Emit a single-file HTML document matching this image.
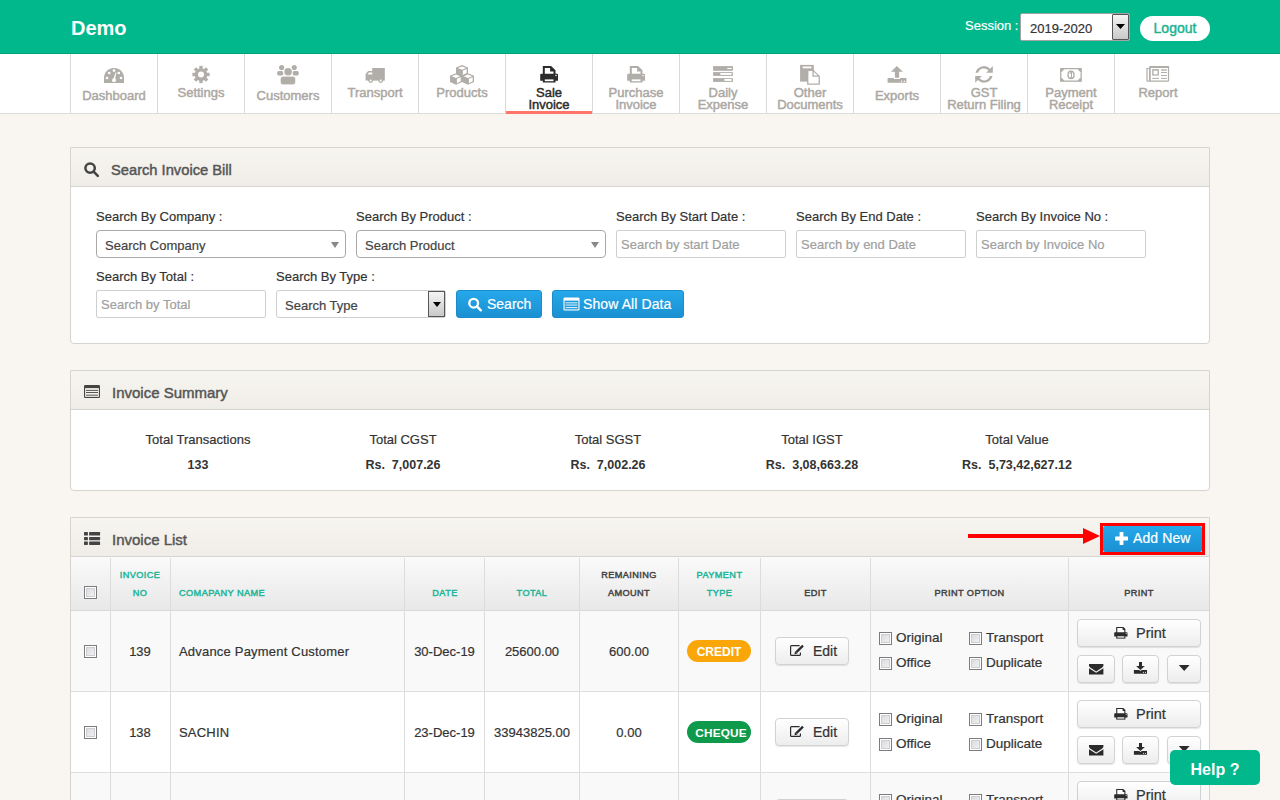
<!DOCTYPE html>
<html><head><meta charset="utf-8"><title>Sale Invoice</title>
<style>
html,body{margin:0;padding:0;}
body{width:1280px;height:800px;overflow:hidden;position:relative;background:#f9f6f1;font-family:"Liberation Sans", sans-serif;}
.t{position:absolute;white-space:nowrap;line-height:1;}
.b{position:absolute;box-sizing:border-box;}
</style></head><body>

<div class="b" style="left:0px;top:0px;width:1280px;height:53px;background:#00b88b;"></div>
<div class="b" style="left:0px;top:53px;width:1280px;height:1px;background:#00a27a;"></div>
<div class="t" style="top:18.07px;font-size:20px;color:#fff;font-weight:bold;left:71px;">Demo</div>
<div class="t" style="top:19.00px;font-size:13px;color:#fff;-webkit-text-stroke:0.2px currentColor;left:965px;">Session :</div>
<div class="b" style="left:1020px;top:13px;width:110px;height:28px;background:#fff;border:1px solid #a3a3a3;border-radius:2px;"></div>
<div class="t" style="top:22.00px;font-size:13px;color:#333;-webkit-text-stroke:0.2px currentColor;left:1030px;">2019-2020</div>
<div class="b" style="left:1112px;top:14px;width:17px;height:26px;background:linear-gradient(#f4f4f4,#c9c9c9);border:1px solid #555;border-radius:1px;"></div>
<svg class="b" style="left:1116px;top:24px;width:9px;height:5px" viewBox="0 0 9 5" fill="#000"><path d="M0 0H9L4.5 5Z"/></svg>
<div class="b" style="left:1140px;top:16px;width:70px;height:25px;background:#fff;border-radius:13px;"></div>
<div class="t" style="top:21.15px;font-size:14px;color:#20b393;-webkit-text-stroke:0.45px currentColor;left:875px;width:600px;text-align:center;">Logout</div>
<div class="b" style="left:0px;top:54px;width:1280px;height:60px;background:#fff;border-bottom:1px solid #dcdcdc;"></div>
<div class="b" style="left:70px;top:54px;width:1px;height:59px;background:#d9d9d9;"></div>
<div class="b" style="left:157px;top:54px;width:1px;height:59px;background:#d9d9d9;"></div>
<div class="b" style="left:244px;top:54px;width:1px;height:59px;background:#d9d9d9;"></div>
<div class="b" style="left:331px;top:54px;width:1px;height:59px;background:#d9d9d9;"></div>
<div class="b" style="left:418px;top:54px;width:1px;height:59px;background:#d9d9d9;"></div>
<div class="b" style="left:505px;top:54px;width:1px;height:59px;background:#d9d9d9;"></div>
<div class="b" style="left:592px;top:54px;width:1px;height:59px;background:#d9d9d9;"></div>
<div class="b" style="left:679px;top:54px;width:1px;height:59px;background:#d9d9d9;"></div>
<div class="b" style="left:766px;top:54px;width:1px;height:59px;background:#d9d9d9;"></div>
<div class="b" style="left:853px;top:54px;width:1px;height:59px;background:#d9d9d9;"></div>
<div class="b" style="left:940px;top:54px;width:1px;height:59px;background:#d9d9d9;"></div>
<div class="b" style="left:1027px;top:54px;width:1px;height:59px;background:#d9d9d9;"></div>
<div class="b" style="left:1114px;top:54px;width:1px;height:59px;background:#d9d9d9;"></div>
<div class="b" style="left:506px;top:111px;width:86px;height:3px;background:#ff756a;"></div>
<div class="t" style="top:89.00px;font-size:13px;color:#aba7a2;-webkit-text-stroke:0.45px currentColor;left:-186px;width:600px;text-align:center;">Dashboard</div>
<div class="t" style="top:86.00px;font-size:13px;color:#aba7a2;-webkit-text-stroke:0.45px currentColor;left:-99px;width:600px;text-align:center;">Settings</div>
<div class="t" style="top:89.00px;font-size:13px;color:#aba7a2;-webkit-text-stroke:0.45px currentColor;left:-12px;width:600px;text-align:center;">Customers</div>
<div class="t" style="top:86.00px;font-size:13px;color:#aba7a2;-webkit-text-stroke:0.45px currentColor;left:75px;width:600px;text-align:center;">Transport</div>
<div class="t" style="top:86.00px;font-size:13px;color:#aba7a2;-webkit-text-stroke:0.45px currentColor;left:162px;width:600px;text-align:center;">Products</div>
<div class="t" style="top:86.00px;font-size:13px;color:#2b2b2b;-webkit-text-stroke:0.45px currentColor;left:249px;width:600px;text-align:center;">Sale</div>
<div class="t" style="top:98.20px;font-size:13px;color:#2b2b2b;-webkit-text-stroke:0.45px currentColor;left:249px;width:600px;text-align:center;">Invoice</div>
<div class="t" style="top:86.00px;font-size:13px;color:#aba7a2;-webkit-text-stroke:0.45px currentColor;left:336px;width:600px;text-align:center;">Purchase</div>
<div class="t" style="top:98.20px;font-size:13px;color:#aba7a2;-webkit-text-stroke:0.45px currentColor;left:336px;width:600px;text-align:center;">Invoice</div>
<div class="t" style="top:86.00px;font-size:13px;color:#aba7a2;-webkit-text-stroke:0.45px currentColor;left:423px;width:600px;text-align:center;">Daily</div>
<div class="t" style="top:98.20px;font-size:13px;color:#aba7a2;-webkit-text-stroke:0.45px currentColor;left:423px;width:600px;text-align:center;">Expense</div>
<div class="t" style="top:86.00px;font-size:13px;color:#aba7a2;-webkit-text-stroke:0.45px currentColor;left:510px;width:600px;text-align:center;">Other</div>
<div class="t" style="top:98.20px;font-size:13px;color:#aba7a2;-webkit-text-stroke:0.45px currentColor;left:510px;width:600px;text-align:center;">Documents</div>
<div class="t" style="top:89.00px;font-size:13px;color:#aba7a2;-webkit-text-stroke:0.45px currentColor;left:597px;width:600px;text-align:center;">Exports</div>
<div class="t" style="top:86.00px;font-size:13px;color:#aba7a2;-webkit-text-stroke:0.45px currentColor;left:684px;width:600px;text-align:center;">GST</div>
<div class="t" style="top:98.20px;font-size:13px;color:#aba7a2;-webkit-text-stroke:0.45px currentColor;left:684px;width:600px;text-align:center;">Return Filing</div>
<div class="t" style="top:86.00px;font-size:13px;color:#aba7a2;-webkit-text-stroke:0.45px currentColor;left:771px;width:600px;text-align:center;">Payment</div>
<div class="t" style="top:98.20px;font-size:13px;color:#aba7a2;-webkit-text-stroke:0.45px currentColor;left:771px;width:600px;text-align:center;">Receipt</div>
<div class="t" style="top:86.00px;font-size:13px;color:#aba7a2;-webkit-text-stroke:0.45px currentColor;left:858px;width:600px;text-align:center;">Report</div>
<svg style="position:absolute;left:100px;top:60px;width:30px;height:30px;overflow:visible" viewBox="100 60 30 30" fill="#b1ada8"><path d="M104 83 V78 C104 72 108.5 68 114 68 C119.5 68 124 72 124 78 V83 Z"/><g fill="#fff"><circle cx="114" cy="70.6" r="1.35"/><circle cx="109.2" cy="73" r="1.35"/><circle cx="118.8" cy="73" r="1.35"/><circle cx="107" cy="78" r="1.35"/><circle cx="121" cy="78" r="1.35"/><path d="M113.2 79.5 L115.7 72.2 L116.4 72.4 L115 79.8 Z"/><circle cx="114" cy="80.2" r="2"/></g></svg>
<svg style="position:absolute;left:188px;top:62px;width:26px;height:26px;overflow:visible" viewBox="188 62 26 26" fill="#b1ada8"><circle cx="201" cy="74.5" r="6.3"/><rect x="199.3" y="65.9" width="3.4" height="8.6" transform="rotate(0.0 201 74.5)"/><rect x="199.3" y="65.9" width="3.4" height="8.6" transform="rotate(45.0 201 74.5)"/><rect x="199.3" y="65.9" width="3.4" height="8.6" transform="rotate(90.0 201 74.5)"/><rect x="199.3" y="65.9" width="3.4" height="8.6" transform="rotate(135.0 201 74.5)"/><rect x="199.3" y="65.9" width="3.4" height="8.6" transform="rotate(180.0 201 74.5)"/><rect x="199.3" y="65.9" width="3.4" height="8.6" transform="rotate(225.0 201 74.5)"/><rect x="199.3" y="65.9" width="3.4" height="8.6" transform="rotate(270.0 201 74.5)"/><rect x="199.3" y="65.9" width="3.4" height="8.6" transform="rotate(315.0 201 74.5)"/><circle cx="201" cy="74.5" r="3.0" fill="#fff"/></svg>
<svg style="position:absolute;left:272px;top:60px;width:32px;height:30px;overflow:visible" viewBox="272 60 32 30" fill="#b1ada8"><circle cx="281.59999999999997" cy="67.5" r="2.55"/><circle cx="294.3" cy="67.5" r="2.55"/><rect x="277.2" y="71.0" width="6" height="4.6" rx="1.6"/><rect x="292.7" y="71.0" width="6" height="4.6" rx="1.6"/><circle cx="288.09999999999997" cy="71.80000000000001" r="4.1" stroke="#fff" stroke-width="0.7"/><rect x="280.3" y="76.2" width="15.3" height="8.6" rx="2.8" stroke="#fff" stroke-width="0.7"/></svg>
<svg style="position:absolute;left:360px;top:62px;width:30px;height:26px;overflow:visible" viewBox="360 62 30 26" fill="#b1ada8"><rect x="372.20000000000005" y="68" width="12.6" height="12.6"/><path d="M365.6 80.6 V74 L368.20000000000005 71.1 H372.6 V80.6 Z"/><path d="M367.40000000000003 74.6 L368.90000000000003 72.6 H372.20000000000005 V74.6 Z" fill="#fff"/><circle cx="370.6" cy="80.6" r="2.4" /><circle cx="370.6" cy="80.6" r="1.05" fill="#fff"/><circle cx="380.70000000000005" cy="80.6" r="2.4" /><circle cx="380.70000000000005" cy="80.6" r="1.05" fill="#fff"/></svg>
<svg style="position:absolute;left:444px;top:60px;width:36px;height:30px;overflow:visible" viewBox="444 60 36 30" fill="#b1ada8"><path d="M462 65 L468 67.6 V73.7 L462 76.6 L456 73.7 V67.6 Z"/><path d="M462 66.4 L466.2 68.1 L462 69.7 L457.8 68.1 Z" fill="#fff"/><path d="M462.9 70.6 L466.7 69.1 V73.1 L462.9 75 Z" fill="#fff"/><path d="M456 73.2 L462 75.8 V81.9 L456 84.8 L450 81.9 V75.8 Z"/><path d="M456 74.60000000000001 L460.2 76.3 L456 77.9 L451.8 76.3 Z" fill="#fff"/><path d="M456.9 78.8 L460.7 77.3 V81.3 L456.9 83.2 Z" fill="#fff"/><path d="M468 73.2 L474 75.8 V81.9 L468 84.8 L462 81.9 V75.8 Z"/><path d="M468 74.60000000000001 L472.2 76.3 L468 77.9 L463.8 76.3 Z" fill="#fff"/><path d="M468.9 78.8 L472.7 77.3 V81.3 L468.9 83.2 Z" fill="#fff"/></svg>
<svg style="position:absolute;left:535px;top:60px;width:28px;height:28px;overflow:visible" viewBox="535 60 28 28" fill="#2b2b2b"><path d="M542.80 66.00 L551.10 66.00 L555.50 70.30 L555.50 74.00 L542.80 74.00 Z" fill="#2b2b2b"/><path d="M544.80 67.90 L550.10 67.90 L550.10 71.60 L553.50 71.60 L553.50 74.00 L544.80 74.00 Z" fill="#fff"/><path d="M541.20 73.70 L557.00 73.70 Q558.00 73.70 558.00 74.70 L558.00 80.70 L555.50 80.70 L555.50 82.60 L542.80 82.60 L542.80 80.70 L540.20 80.70 L540.20 74.70 Q540.20 73.70 541.20 73.70 Z" fill="#2b2b2b"/><path d="M544.80 79.40 L553.50 79.40 L553.50 81.20 L544.80 81.20 Z" fill="#fff"/><circle cx="556.00" cy="75.60" r="0.75" fill="#fff"/></svg>
<svg style="position:absolute;left:622px;top:60px;width:28px;height:28px;overflow:visible" viewBox="622 60 28 28" fill="#b1ada8"><path d="M629.80 66.00 L638.10 66.00 L642.50 70.30 L642.50 74.00 L629.80 74.00 Z" fill="#b1ada8"/><path d="M631.80 67.90 L637.10 67.90 L637.10 71.60 L640.50 71.60 L640.50 74.00 L631.80 74.00 Z" fill="#fff"/><path d="M628.20 73.70 L644.00 73.70 Q645.00 73.70 645.00 74.70 L645.00 80.70 L642.50 80.70 L642.50 82.60 L629.80 82.60 L629.80 80.70 L627.20 80.70 L627.20 74.70 Q627.20 73.70 628.20 73.70 Z" fill="#b1ada8"/><path d="M631.80 79.40 L640.50 79.40 L640.50 81.20 L631.80 81.20 Z" fill="#fff"/><circle cx="643.00" cy="75.60" r="0.75" fill="#fff"/></svg>
<svg style="position:absolute;left:708px;top:60px;width:30px;height:28px;overflow:visible" viewBox="708 60 30 28" fill="#b1ada8"><rect x="713.1" y="66.1" width="19.8" height="4.7"/><rect x="713.1" y="72.1" width="19.8" height="3.8"/><rect x="713.1" y="78.1" width="19.8" height="3.8"/><g fill="#fff"><rect x="727.3" y="67.9" width="4.3" height="1.2"/><rect x="720.3" y="73" width="11.3" height="1.9"/><rect x="724.4" y="78.9" width="7.2" height="2"/></g></svg>
<svg style="position:absolute;left:795px;top:60px;width:30px;height:30px;overflow:visible" viewBox="795 60 30 30" fill="#b1ada8"><rect x="800.1" y="64.9" width="13.7" height="16.7"/><rect x="802.7" y="66.5" width="8.8" height="1.8" fill="#fff"/><path d="M807.1 69.9 H813.4 L819.9 75.9 V84.80000000000001 H807.1 Z"/><path d="M808.4 71.10000000000001 H812.4 V76.7 H818.6 V83.5 H808.4 Z" fill="#fff"/><path d="M813.7 71.80000000000001 L817.7 75.5 H813.7 Z" fill="#fff"/></svg>
<svg style="position:absolute;left:882px;top:60px;width:30px;height:28px;overflow:visible" viewBox="882 60 30 28" fill="#b1ada8"><path d="M896.8000000000001 66 L902.9 71.8 H899.1 V77.8 H894.9 V71.8 H891.0 Z"/><path d="M887.6 78.1 H893.9 V79 H900.1 V78.1 H906.4 V82.8 H887.6 Z"/><circle cx="901.6" cy="81.3" r="0.7" fill="#fff"/><circle cx="904.4" cy="81.3" r="0.7" fill="#fff"/></svg>
<svg style="position:absolute;left:970px;top:60px;width:28px;height:28px;overflow:visible" viewBox="970 60 28 28" fill="#b1ada8"><path d="M975.5 72.8 A8.7 8.7 0 0 1 990.1 68.7 L992.8000000000001 66 V72.8 H986.1 L988.5 70.5 A6.1 6.1 0 0 0 978.1 72.8 Z"/><path d="M975.5 72.8 A8.7 8.7 0 0 1 990.1 68.7 L992.8000000000001 66 V72.8 H986.1 L988.5 70.5 A6.1 6.1 0 0 0 978.1 72.8 Z" transform="rotate(180 984.0 74.4)"/></svg>
<svg style="position:absolute;left:1055px;top:62px;width:32px;height:26px;overflow:visible" viewBox="1055 62 32 26" fill="#b1ada8"><rect x="1060.1" y="68" width="21.7" height="13.8"/><path d="M1064.3 69.2 H1077.6 L1080.5 72.2 V77.6 L1077.6 80.6 H1064.3 L1061.3999999999999 77.6 V72.2 Z" fill="#fff"/><ellipse cx="1071.0" cy="74.9" rx="3.7" ry="4.4"/><ellipse cx="1071.0" cy="74.9" rx="2.3" ry="3.0" fill="#fff"/><path d="M1069.6999999999998 72.9 L1071.1 71.9 H1072.0 V77.1 H1071.0 V73.4 L1070.1 73.9 Z"/><rect x="1069.3999999999999" y="77.1" width="3.3" height="0.9"/></svg>
<svg style="position:absolute;left:1140px;top:60px;width:34px;height:28px;overflow:visible" viewBox="1140 60 34 28" fill="#b1ada8"><path d="M1149.3000000000002 66 H1169.1000000000001 V80.6 Q1169.1000000000001 81.8 1167.9 81.8 H1147.6000000000001 Q1146.4 81.8 1146.4 80.6 V68 H1149.3000000000002 Z"/><path d="M1150.7 67.9 H1167.9 V80.3 Q1167.9 80.6 1167.6000000000001 80.6 H1150.7 Z" fill="#fff"/><rect x="1147.6000000000001" y="69" width="1.4" height="11.6" fill="#fff"/><rect x="1152.2" y="69.1" width="6.7" height="6.5"/><rect x="1153.5" y="70.6" width="4.1" height="3.8" fill="#fff"/><rect x="1161.0" y="69.3" width="5.8" height="1.4"/><rect x="1161.0" y="72" width="5.8" height="1"/><rect x="1161.0" y="75" width="5.8" height="1"/><rect x="1152.2" y="77.9" width="6.7" height="1"/><rect x="1161.0" y="77.9" width="5.8" height="1"/></svg>
<div class="b" style="left:70px;top:147px;width:1140px;height:197px;background:#fff;border:1px solid #d6d4cf;border-radius:0 0 4px 4px;"></div>
<div class="b" style="left:71px;top:148px;width:1138px;height:39px;background:linear-gradient(#f7f5f0,#f0ede8);border-bottom:1px solid #d6d4cf;"></div>
<div class="b" style="left:70px;top:370px;width:1140px;height:121px;background:#fff;border:1px solid #d6d4cf;border-radius:0 0 4px 4px;"></div>
<div class="b" style="left:71px;top:371px;width:1138px;height:39px;background:linear-gradient(#f7f5f0,#f0ede8);border-bottom:1px solid #d6d4cf;"></div>
<div class="b" style="left:70px;top:517px;width:1140px;height:484px;background:#fff;border:1px solid #d6d4cf;border-radius:0 0 4px 4px;"></div>
<div class="b" style="left:71px;top:518px;width:1138px;height:39px;background:linear-gradient(#f7f5f0,#f0ede8);border-bottom:1px solid #d6d4cf;"></div>
<svg style="position:absolute;left:80px;top:158px;width:24px;height:24px;overflow:visible" viewBox="80 158 24 24" fill="#444"><circle cx="90.1" cy="168.1" r="4.7" fill="none" stroke="#444" stroke-width="2.5"/><path d="M93.6 171.6 L97.8 175.8" stroke="#444" stroke-width="2.6" stroke-linecap="round"/></svg>
<svg style="position:absolute;left:80px;top:380px;width:24px;height:24px;overflow:visible" viewBox="80 380 24 24" fill="#444"><rect x="84" y="385" width="16" height="13" rx="1.3" fill="#444"/><rect x="85.1" y="388.1" width="13.8" height="8.8" fill="#f3f1ec"/><rect x="86" y="389.9" width="12" height="0.9" fill="#444"/><rect x="86" y="392.1" width="12" height="0.9" fill="#444"/><rect x="86" y="394.7" width="12" height="0.9" fill="#444"/></svg>
<svg style="position:absolute;left:80px;top:528px;width:24px;height:24px;overflow:visible" viewBox="80 528 24 24" fill="#444"><g fill="#444"><rect x="84" y="532" width="3.9" height="3.6" rx="0.6"/><rect x="89.1" y="532" width="11" height="3.6" rx="0.6"/><rect x="84" y="536.9" width="3.9" height="3.3" rx="0.6"/><rect x="89.1" y="536.9" width="11" height="3.3" rx="0.6"/><rect x="84" y="541.5" width="3.9" height="3.4" rx="0.6"/><rect x="89.1" y="541.5" width="11" height="3.4" rx="0.6"/></g></svg>
<div class="t" style="top:162.96px;font-size:14.7px;color:#555;-webkit-text-stroke:0.45px currentColor;left:111px;">Search Invoice Bill</div>
<div class="t" style="top:384.90px;font-size:15px;color:#555;-webkit-text-stroke:0.45px currentColor;left:112px;">Invoice Summary</div>
<div class="t" style="top:532.30px;font-size:15px;color:#555;-webkit-text-stroke:0.45px currentColor;left:112px;">Invoice List</div>
<div class="t" style="top:210.00px;font-size:13px;color:#333;-webkit-text-stroke:0.2px currentColor;left:96px;">Search By Company :</div>
<div class="t" style="top:210.00px;font-size:13px;color:#333;-webkit-text-stroke:0.2px currentColor;left:356px;">Search By Product :</div>
<div class="t" style="top:210.00px;font-size:13px;color:#333;-webkit-text-stroke:0.2px currentColor;left:616px;">Search By Start Date :</div>
<div class="t" style="top:210.00px;font-size:13px;color:#333;-webkit-text-stroke:0.2px currentColor;left:796px;">Search By End Date :</div>
<div class="t" style="top:210.00px;font-size:13px;color:#333;-webkit-text-stroke:0.2px currentColor;left:976px;">Search By Invoice No :</div>
<div class="t" style="top:270.00px;font-size:13px;color:#333;-webkit-text-stroke:0.2px currentColor;left:96px;">Search By Total :</div>
<div class="t" style="top:270.00px;font-size:13px;color:#333;-webkit-text-stroke:0.2px currentColor;left:276px;">Search By Type :</div>
<div class="b" style="left:96px;top:230px;width:250px;height:28px;background:#fff;border:1px solid #a9a9a9;border-radius:4px;"></div>
<div class="t" style="top:239.00px;font-size:13px;color:#444;-webkit-text-stroke:0.2px currentColor;left:105px;">Search Company</div>
<svg class="b" style="left:331px;top:242px;width:8px;height:6px" viewBox="0 0 8 6" fill="#888"><path d="M0 0H8L4 6Z"/></svg>
<div class="b" style="left:356px;top:230px;width:250px;height:28px;background:#fff;border:1px solid #a9a9a9;border-radius:4px;"></div>
<div class="t" style="top:239.00px;font-size:13px;color:#444;-webkit-text-stroke:0.2px currentColor;left:365px;">Search Product</div>
<svg class="b" style="left:591px;top:242px;width:8px;height:6px" viewBox="0 0 8 6" fill="#888"><path d="M0 0H8L4 6Z"/></svg>
<div class="b" style="left:616px;top:230px;width:170px;height:28px;background:#fff;border:1px solid #cfcfcf;border-radius:2px;"></div>
<div class="t" style="top:237.80px;font-size:13px;color:#a0a0a0;-webkit-text-stroke:0.2px currentColor;left:621px;">Search by start Date</div>
<div class="b" style="left:796px;top:230px;width:170px;height:28px;background:#fff;border:1px solid #cfcfcf;border-radius:2px;"></div>
<div class="t" style="top:237.80px;font-size:13px;color:#a0a0a0;-webkit-text-stroke:0.2px currentColor;left:801px;">Search by end Date</div>
<div class="b" style="left:976px;top:230px;width:170px;height:28px;background:#fff;border:1px solid #cfcfcf;border-radius:2px;"></div>
<div class="t" style="top:237.80px;font-size:13px;color:#a0a0a0;-webkit-text-stroke:0.2px currentColor;left:981px;">Search by Invoice No</div>
<div class="b" style="left:96px;top:290px;width:170px;height:28px;background:#fff;border:1px solid #cfcfcf;border-radius:2px;"></div>
<div class="t" style="top:297.80px;font-size:13px;color:#a0a0a0;-webkit-text-stroke:0.2px currentColor;left:101px;">Search by Total</div>
<div class="b" style="left:276px;top:290px;width:170px;height:28px;background:#fff;border:1px solid #cfcfcf;border-radius:3px;"></div>
<div class="t" style="top:299.00px;font-size:13px;color:#444;-webkit-text-stroke:0.2px currentColor;left:285px;">Search Type</div>
<div class="b" style="left:428px;top:291px;width:17px;height:26px;background:linear-gradient(#f4f4f4,#c9c9c9);border:1px solid #555;"></div>
<svg class="b" style="left:433px;top:302px;width:8px;height:5px" viewBox="0 0 8 5" fill="#000"><path d="M0 0H8L4 5Z"/></svg>
<div class="b" style="left:456px;top:290px;width:86px;height:28px;background:linear-gradient(#25a8ea,#1b90d2);border:1px solid #1a8ccc;border-radius:3px;"></div>
<div class="t" style="top:297.15px;font-size:14px;color:#fff;-webkit-text-stroke:0.2px currentColor;left:487px;">Search</div>
<div class="b" style="left:552px;top:290px;width:132px;height:28px;background:linear-gradient(#25a8ea,#1b90d2);border:1px solid #1a8ccc;border-radius:3px;"></div>
<div class="t" style="top:297.15px;font-size:14px;color:#fff;-webkit-text-stroke:0.2px currentColor;letter-spacing:0.1px;left:583px;">Show All Data</div>
<svg style="position:absolute;left:464px;top:294px;width:22px;height:20px;overflow:visible" viewBox="464 294 22 20" fill="#fff"><circle cx="473.673" cy="303.173" r="4.371" fill="none" stroke="#fff" stroke-width="2.325"/><path d="M476.928 306.428 L480.834 310.334" stroke="#fff" stroke-width="2.418" stroke-linecap="round"/></svg>
<svg style="position:absolute;left:560px;top:294px;width:22px;height:20px;overflow:visible" viewBox="560 294 22 20" fill="#fff"><rect x="563.5" y="297.5" width="16" height="13" rx="1.3" fill="#fff"/><rect x="564.6" y="300.6" width="13.8" height="8.8" fill="#1f9bdc"/><rect x="565.5" y="302.4" width="12" height="0.9" fill="#fff"/><rect x="565.5" y="304.6" width="12" height="0.9" fill="#fff"/><rect x="565.5" y="307.2" width="12" height="0.9" fill="#fff"/></svg>
<div class="t" style="top:433.10px;font-size:13px;color:#333;-webkit-text-stroke:0.2px currentColor;left:-102px;width:600px;text-align:center;">Total Transactions</div>
<div class="t" style="top:458.82px;font-size:12.5px;color:#333;font-weight:bold;left:-102px;width:600px;text-align:center;">133</div>
<div class="t" style="top:433.10px;font-size:13px;color:#333;-webkit-text-stroke:0.2px currentColor;left:103px;width:600px;text-align:center;">Total CGST</div>
<div class="t" style="top:458.82px;font-size:12.5px;color:#333;font-weight:bold;left:103px;width:600px;text-align:center;">Rs.&nbsp; 7,007.26</div>
<div class="t" style="top:433.10px;font-size:13px;color:#333;-webkit-text-stroke:0.2px currentColor;left:308px;width:600px;text-align:center;">Total SGST</div>
<div class="t" style="top:458.82px;font-size:12.5px;color:#333;font-weight:bold;left:308px;width:600px;text-align:center;">Rs.&nbsp; 7,002.26</div>
<div class="t" style="top:433.10px;font-size:13px;color:#333;-webkit-text-stroke:0.2px currentColor;left:512px;width:600px;text-align:center;">Total IGST</div>
<div class="t" style="top:458.82px;font-size:12.5px;color:#333;font-weight:bold;left:512px;width:600px;text-align:center;">Rs.&nbsp; 3,08,663.28</div>
<div class="t" style="top:433.10px;font-size:13px;color:#333;-webkit-text-stroke:0.2px currentColor;left:717px;width:600px;text-align:center;">Total Value</div>
<div class="t" style="top:458.82px;font-size:12.5px;color:#333;font-weight:bold;left:717px;width:600px;text-align:center;">Rs.&nbsp; 5,73,42,627.12</div>
<div class="b" style="left:1100px;top:523px;width:105px;height:32px;border:3px solid #f00;"></div>
<div class="b" style="left:1103px;top:526px;width:99px;height:26px;background:linear-gradient(#25a8ea,#1b90d2);border-radius:2px;"></div>
<div class="t" style="top:531.25px;font-size:14px;color:#fff;-webkit-text-stroke:0.2px currentColor;letter-spacing:0.1px;left:1133px;">Add New</div>
<svg style="position:absolute;left:1110px;top:528px;width:22px;height:22px;overflow:visible" viewBox="1110 528 22 22" fill="#fff"><rect x="1115" y="536.6" width="13" height="3.8" rx="0.6"/><rect x="1119.6" y="532" width="3.8" height="13" rx="0.6"/></svg>
<svg class="b" style="left:960px;top:520px;width:150px;height:35px" viewBox="0 0 150 35"><rect x="8" y="14" width="116" height="4" fill="#f00"/><path d="M123 8L140 16L123 24Z" fill="#f00"/></svg>
<div class="b" style="left:71px;top:557px;width:1138px;height:54px;background:linear-gradient(#fafafa,#e8e8e8);border-bottom:1px solid #d9d9d9;"></div>
<div class="b" style="left:71px;top:611px;width:1138px;height:81px;background:#f9f9f9;border-bottom:1px solid #dddddd;"></div>
<div class="b" style="left:71px;top:692px;width:1138px;height:81px;background:#fff;border-bottom:1px solid #dddddd;"></div>
<div class="b" style="left:71px;top:773px;width:1138px;height:81px;background:#f9f9f9;border-bottom:1px solid #dddddd;"></div>
<div class="b" style="left:110px;top:558px;width:1px;height:243px;background:#dcdcdc;"></div>
<div class="b" style="left:170px;top:558px;width:1px;height:243px;background:#dcdcdc;"></div>
<div class="b" style="left:404px;top:558px;width:1px;height:243px;background:#dcdcdc;"></div>
<div class="b" style="left:484px;top:558px;width:1px;height:243px;background:#dcdcdc;"></div>
<div class="b" style="left:579px;top:558px;width:1px;height:243px;background:#dcdcdc;"></div>
<div class="b" style="left:678px;top:558px;width:1px;height:243px;background:#dcdcdc;"></div>
<div class="b" style="left:760px;top:558px;width:1px;height:243px;background:#dcdcdc;"></div>
<div class="b" style="left:870px;top:558px;width:1px;height:243px;background:#dcdcdc;"></div>
<div class="b" style="left:1068px;top:558px;width:1px;height:243px;background:#dcdcdc;"></div>
<div class="b" style="left:84px;top:586px;width:13px;height:13px;background:linear-gradient(135deg,#d4d6dc,#f6f6f6);border:1px solid #7c7c7c;box-shadow:inset 0 0 0 1px #fff,inset 0 0 0 2px #cdcdd2;"></div>
<div class="t" style="top:571.41px;font-size:9.2px;color:#1db598;-webkit-text-stroke:0.45px currentColor;letter-spacing:0.4px;left:-160px;width:600px;text-align:center;">INVOICE</div>
<div class="t" style="top:589.21px;font-size:9.2px;color:#1db598;-webkit-text-stroke:0.45px currentColor;letter-spacing:0.4px;left:-160px;width:600px;text-align:center;">NO</div>
<div class="t" style="top:589.21px;font-size:9.2px;color:#1db598;-webkit-text-stroke:0.45px currentColor;letter-spacing:0.4px;left:179px;">COMAPANY NAME</div>
<div class="t" style="top:589.21px;font-size:9.2px;color:#1db598;-webkit-text-stroke:0.45px currentColor;letter-spacing:0.4px;left:145px;width:600px;text-align:center;">DATE</div>
<div class="t" style="top:589.21px;font-size:9.2px;color:#1db598;-webkit-text-stroke:0.45px currentColor;letter-spacing:0.4px;left:232px;width:600px;text-align:center;">TOTAL</div>
<div class="t" style="top:571.41px;font-size:9.2px;color:#444;-webkit-text-stroke:0.45px currentColor;letter-spacing:0.4px;left:329px;width:600px;text-align:center;">REMAINING</div>
<div class="t" style="top:589.21px;font-size:9.2px;color:#444;-webkit-text-stroke:0.45px currentColor;letter-spacing:0.4px;left:329px;width:600px;text-align:center;">AMOUNT</div>
<div class="t" style="top:571.41px;font-size:9.2px;color:#1db598;-webkit-text-stroke:0.45px currentColor;letter-spacing:0.4px;left:419.5px;width:600px;text-align:center;">PAYMENT</div>
<div class="t" style="top:589.21px;font-size:9.2px;color:#1db598;-webkit-text-stroke:0.45px currentColor;letter-spacing:0.4px;left:419.5px;width:600px;text-align:center;">TYPE</div>
<div class="t" style="top:589.21px;font-size:9.2px;color:#444;-webkit-text-stroke:0.45px currentColor;letter-spacing:0.4px;left:515.5px;width:600px;text-align:center;">EDIT</div>
<div class="t" style="top:589.21px;font-size:9.2px;color:#444;-webkit-text-stroke:0.45px currentColor;letter-spacing:0.4px;left:669.5px;width:600px;text-align:center;">PRINT OPTION</div>
<div class="t" style="top:589.21px;font-size:9.2px;color:#444;-webkit-text-stroke:0.45px currentColor;letter-spacing:0.4px;left:839px;width:600px;text-align:center;">PRINT</div>
<div class="b" style="left:84px;top:645px;width:13px;height:13px;background:linear-gradient(135deg,#d4d6dc,#f6f6f6);border:1px solid #7c7c7c;box-shadow:inset 0 0 0 1px #fff,inset 0 0 0 2px #cdcdd2;"></div>
<div class="t" style="top:645.00px;font-size:13px;color:#333;-webkit-text-stroke:0.2px currentColor;left:-160px;width:600px;text-align:center;">139</div>
<div class="t" style="top:645.00px;font-size:13px;color:#333;-webkit-text-stroke:0.2px currentColor;letter-spacing:0.2px;left:179px;">Advance Payment Customer</div>
<div class="t" style="top:645.00px;font-size:13px;color:#333;-webkit-text-stroke:0.2px currentColor;left:144.5px;width:600px;text-align:center;">30-Dec-19</div>
<div class="t" style="top:645.00px;font-size:13px;color:#333;-webkit-text-stroke:0.2px currentColor;left:232px;width:600px;text-align:center;">25600.00</div>
<div class="t" style="top:645.00px;font-size:13px;color:#333;-webkit-text-stroke:0.2px currentColor;left:329px;width:600px;text-align:center;">600.00</div>
<div class="b" style="left:687px;top:640px;width:64px;height:22px;background:#fba608;border-radius:11px;"></div>
<div class="t" style="top:645.84px;font-size:12px;color:#fff;font-weight:bold;left:419px;width:600px;text-align:center;">CREDIT</div>
<div class="b" style="left:775px;top:637px;width:74px;height:28px;background:linear-gradient(#ffffff,#ededed);border:1px solid #d2d2d2;border-radius:4px;box-shadow:0 1px 1px rgba(0,0,0,.1);"></div>
<div class="t" style="top:644.15px;font-size:14px;color:#333;-webkit-text-stroke:0.2px currentColor;left:813px;">Edit</div>
<div class="b" style="left:879px;top:632px;width:13px;height:13px;background:linear-gradient(135deg,#d4d6dc,#f6f6f6);border:1px solid #7c7c7c;box-shadow:inset 0 0 0 1px #fff,inset 0 0 0 2px #cdcdd2;"></div>
<div class="t" style="top:630.57px;font-size:13.5px;color:#333;-webkit-text-stroke:0.2px currentColor;left:896px;">Original</div>
<div class="b" style="left:879px;top:657px;width:13px;height:13px;background:linear-gradient(135deg,#d4d6dc,#f6f6f6);border:1px solid #7c7c7c;box-shadow:inset 0 0 0 1px #fff,inset 0 0 0 2px #cdcdd2;"></div>
<div class="t" style="top:655.57px;font-size:13.5px;color:#333;-webkit-text-stroke:0.2px currentColor;left:896px;">Office</div>
<div class="b" style="left:969px;top:632px;width:13px;height:13px;background:linear-gradient(135deg,#d4d6dc,#f6f6f6);border:1px solid #7c7c7c;box-shadow:inset 0 0 0 1px #fff,inset 0 0 0 2px #cdcdd2;"></div>
<div class="t" style="top:630.57px;font-size:13.5px;color:#333;-webkit-text-stroke:0.2px currentColor;left:986px;">Transport</div>
<div class="b" style="left:969px;top:657px;width:13px;height:13px;background:linear-gradient(135deg,#d4d6dc,#f6f6f6);border:1px solid #7c7c7c;box-shadow:inset 0 0 0 1px #fff,inset 0 0 0 2px #cdcdd2;"></div>
<div class="t" style="top:655.57px;font-size:13.5px;color:#333;-webkit-text-stroke:0.2px currentColor;left:986px;">Duplicate</div>
<div class="b" style="left:1077px;top:619px;width:124px;height:28px;background:linear-gradient(#ffffff,#ededed);border:1px solid #d2d2d2;border-radius:4px;box-shadow:0 1px 1px rgba(0,0,0,.1);"></div>
<div class="t" style="top:625.73px;font-size:14.5px;color:#333;-webkit-text-stroke:0.2px currentColor;left:1136px;">Print</div>
<div class="b" style="left:1077px;top:655px;width:38px;height:28px;background:linear-gradient(#ffffff,#ededed);border:1px solid #d2d2d2;border-radius:4px;box-shadow:0 1px 1px rgba(0,0,0,.1);"></div>
<div class="b" style="left:1122px;top:655px;width:37px;height:28px;background:linear-gradient(#ffffff,#ededed);border:1px solid #d2d2d2;border-radius:4px;box-shadow:0 1px 1px rgba(0,0,0,.1);"></div>
<div class="b" style="left:1167px;top:655px;width:34px;height:28px;background:linear-gradient(#ffffff,#ededed);border:1px solid #d2d2d2;border-radius:4px;box-shadow:0 1px 1px rgba(0,0,0,.1);"></div>
<div class="b" style="left:84px;top:726px;width:13px;height:13px;background:linear-gradient(135deg,#d4d6dc,#f6f6f6);border:1px solid #7c7c7c;box-shadow:inset 0 0 0 1px #fff,inset 0 0 0 2px #cdcdd2;"></div>
<div class="t" style="top:726.00px;font-size:13px;color:#333;-webkit-text-stroke:0.2px currentColor;left:-160px;width:600px;text-align:center;">138</div>
<div class="t" style="top:726.00px;font-size:13px;color:#333;-webkit-text-stroke:0.2px currentColor;letter-spacing:0.2px;left:179px;">SACHIN</div>
<div class="t" style="top:726.00px;font-size:13px;color:#333;-webkit-text-stroke:0.2px currentColor;left:144.5px;width:600px;text-align:center;">23-Dec-19</div>
<div class="t" style="top:726.00px;font-size:13px;color:#333;-webkit-text-stroke:0.2px currentColor;left:232px;width:600px;text-align:center;">33943825.00</div>
<div class="t" style="top:726.00px;font-size:13px;color:#333;-webkit-text-stroke:0.2px currentColor;left:329px;width:600px;text-align:center;">0.00</div>
<div class="b" style="left:687px;top:721px;width:64px;height:22px;background:#0f9a4b;border-radius:11px;"></div>
<div class="t" style="top:728.01px;font-size:11.8px;color:#fff;font-weight:bold;letter-spacing:0.15px;left:421px;width:600px;text-align:center;">CHEQUE</div>
<div class="b" style="left:775px;top:718px;width:74px;height:28px;background:linear-gradient(#ffffff,#ededed);border:1px solid #d2d2d2;border-radius:4px;box-shadow:0 1px 1px rgba(0,0,0,.1);"></div>
<div class="t" style="top:725.15px;font-size:14px;color:#333;-webkit-text-stroke:0.2px currentColor;left:813px;">Edit</div>
<div class="b" style="left:879px;top:713px;width:13px;height:13px;background:linear-gradient(135deg,#d4d6dc,#f6f6f6);border:1px solid #7c7c7c;box-shadow:inset 0 0 0 1px #fff,inset 0 0 0 2px #cdcdd2;"></div>
<div class="t" style="top:711.57px;font-size:13.5px;color:#333;-webkit-text-stroke:0.2px currentColor;left:896px;">Original</div>
<div class="b" style="left:879px;top:738px;width:13px;height:13px;background:linear-gradient(135deg,#d4d6dc,#f6f6f6);border:1px solid #7c7c7c;box-shadow:inset 0 0 0 1px #fff,inset 0 0 0 2px #cdcdd2;"></div>
<div class="t" style="top:736.57px;font-size:13.5px;color:#333;-webkit-text-stroke:0.2px currentColor;left:896px;">Office</div>
<div class="b" style="left:969px;top:713px;width:13px;height:13px;background:linear-gradient(135deg,#d4d6dc,#f6f6f6);border:1px solid #7c7c7c;box-shadow:inset 0 0 0 1px #fff,inset 0 0 0 2px #cdcdd2;"></div>
<div class="t" style="top:711.57px;font-size:13.5px;color:#333;-webkit-text-stroke:0.2px currentColor;left:986px;">Transport</div>
<div class="b" style="left:969px;top:738px;width:13px;height:13px;background:linear-gradient(135deg,#d4d6dc,#f6f6f6);border:1px solid #7c7c7c;box-shadow:inset 0 0 0 1px #fff,inset 0 0 0 2px #cdcdd2;"></div>
<div class="t" style="top:736.57px;font-size:13.5px;color:#333;-webkit-text-stroke:0.2px currentColor;left:986px;">Duplicate</div>
<div class="b" style="left:1077px;top:700px;width:124px;height:28px;background:linear-gradient(#ffffff,#ededed);border:1px solid #d2d2d2;border-radius:4px;box-shadow:0 1px 1px rgba(0,0,0,.1);"></div>
<div class="t" style="top:706.73px;font-size:14.5px;color:#333;-webkit-text-stroke:0.2px currentColor;left:1136px;">Print</div>
<div class="b" style="left:1077px;top:736px;width:38px;height:28px;background:linear-gradient(#ffffff,#ededed);border:1px solid #d2d2d2;border-radius:4px;box-shadow:0 1px 1px rgba(0,0,0,.1);"></div>
<div class="b" style="left:1122px;top:736px;width:37px;height:28px;background:linear-gradient(#ffffff,#ededed);border:1px solid #d2d2d2;border-radius:4px;box-shadow:0 1px 1px rgba(0,0,0,.1);"></div>
<div class="b" style="left:1167px;top:736px;width:34px;height:28px;background:linear-gradient(#ffffff,#ededed);border:1px solid #d2d2d2;border-radius:4px;box-shadow:0 1px 1px rgba(0,0,0,.1);"></div>
<div class="b" style="left:84px;top:807px;width:13px;height:13px;background:linear-gradient(135deg,#d4d6dc,#f6f6f6);border:1px solid #7c7c7c;box-shadow:inset 0 0 0 1px #fff,inset 0 0 0 2px #cdcdd2;"></div>
<div class="b" style="left:775px;top:799px;width:74px;height:28px;background:linear-gradient(#ffffff,#ededed);border:1px solid #d2d2d2;border-radius:4px;box-shadow:0 1px 1px rgba(0,0,0,.1);"></div>
<div class="t" style="top:806.15px;font-size:14px;color:#333;-webkit-text-stroke:0.2px currentColor;left:813px;">Edit</div>
<div class="b" style="left:879px;top:794px;width:13px;height:13px;background:linear-gradient(135deg,#d4d6dc,#f6f6f6);border:1px solid #7c7c7c;box-shadow:inset 0 0 0 1px #fff,inset 0 0 0 2px #cdcdd2;"></div>
<div class="t" style="top:792.57px;font-size:13.5px;color:#333;-webkit-text-stroke:0.2px currentColor;left:896px;">Original</div>
<div class="b" style="left:879px;top:819px;width:13px;height:13px;background:linear-gradient(135deg,#d4d6dc,#f6f6f6);border:1px solid #7c7c7c;box-shadow:inset 0 0 0 1px #fff,inset 0 0 0 2px #cdcdd2;"></div>
<div class="t" style="top:817.57px;font-size:13.5px;color:#333;-webkit-text-stroke:0.2px currentColor;left:896px;">Office</div>
<div class="b" style="left:969px;top:794px;width:13px;height:13px;background:linear-gradient(135deg,#d4d6dc,#f6f6f6);border:1px solid #7c7c7c;box-shadow:inset 0 0 0 1px #fff,inset 0 0 0 2px #cdcdd2;"></div>
<div class="t" style="top:792.57px;font-size:13.5px;color:#333;-webkit-text-stroke:0.2px currentColor;left:986px;">Transport</div>
<div class="b" style="left:969px;top:819px;width:13px;height:13px;background:linear-gradient(135deg,#d4d6dc,#f6f6f6);border:1px solid #7c7c7c;box-shadow:inset 0 0 0 1px #fff,inset 0 0 0 2px #cdcdd2;"></div>
<div class="t" style="top:817.57px;font-size:13.5px;color:#333;-webkit-text-stroke:0.2px currentColor;left:986px;">Duplicate</div>
<div class="b" style="left:1077px;top:781px;width:124px;height:28px;background:linear-gradient(#ffffff,#ededed);border:1px solid #d2d2d2;border-radius:4px;box-shadow:0 1px 1px rgba(0,0,0,.1);"></div>
<div class="t" style="top:787.73px;font-size:14.5px;color:#333;-webkit-text-stroke:0.2px currentColor;left:1136px;">Print</div>
<div class="b" style="left:1077px;top:817px;width:38px;height:28px;background:linear-gradient(#ffffff,#ededed);border:1px solid #d2d2d2;border-radius:4px;box-shadow:0 1px 1px rgba(0,0,0,.1);"></div>
<div class="b" style="left:1122px;top:817px;width:37px;height:28px;background:linear-gradient(#ffffff,#ededed);border:1px solid #d2d2d2;border-radius:4px;box-shadow:0 1px 1px rgba(0,0,0,.1);"></div>
<div class="b" style="left:1167px;top:817px;width:34px;height:28px;background:linear-gradient(#ffffff,#ededed);border:1px solid #d2d2d2;border-radius:4px;box-shadow:0 1px 1px rgba(0,0,0,.1);"></div>
<svg style="position:absolute;left:786px;top:640px;width:20px;height:20px;overflow:visible" viewBox="786 640 20 20" fill="#2b2b2b"><path d="M799.6 645.6 H791.5 Q790.6 645.6 790.6 646.5 V654.4 Q790.6 655.3 791.5 655.3 H799.5 Q800.4 655.3 800.4 654.4 V652.4" fill="none" stroke="#2b2b2b" stroke-width="1.2"/><path d="M796.4 652.1 L803.0 645.7" stroke="#2b2b2b" stroke-width="2.3"/><path d="M795.0 651.0 L797.6 653.4 L794.5 654.3 Z" fill="#2b2b2b"/></svg>
<svg style="position:absolute;left:1110px;top:622px;width:22px;height:22px;overflow:visible" viewBox="1110 622 22 22" fill="#2b2b2b"><path d="M1116.2 627 H1123.4 L1125.4 629 V633 H1116.2 Z" fill="#2b2b2b"/><path d="M1117.3 628.1 H1122.6000000000001 V629.9 H1124.3 V633 H1117.3 Z" fill="#fff"/><path d="M1115.0 632.3 H1126.7 Q1127.5 632.3 1127.5 633.1 V636.5 H1114.2 V633.1 Q1114.2 632.3 1115.0 632.3 Z" fill="#2b2b2b"/><path d="M1116.2 636 H1125.4 V638.6 H1116.2 Z" fill="#2b2b2b"/><rect x="1117.3" y="636.3" width="7" height="1.3" fill="#fff"/><circle cx="1126.2" cy="633.6" r="0.5" fill="#fff"/></svg>
<svg style="position:absolute;left:1085px;top:660px;width:22px;height:20px;overflow:visible" viewBox="1085 660 22 20" fill="#2b2b2b"><path d="M1089 664 H1103.4 V665.6 Q1103.4 666.6 1102.2 667.4 L1096.2 671.4 L1090.2 667.4 Q1089 666.6 1089 665.6 Z" fill="#2b2b2b"/><path d="M1089 668.3 L1096.2 672.7 L1103.4 668.3 V674.6 H1089 Z" fill="#2b2b2b"/></svg>
<svg style="position:absolute;left:1130px;top:658px;width:22px;height:20px;overflow:visible" viewBox="1130 658 22 20" fill="#2b2b2b"><rect x="1139.0" y="662" width="3" height="4.4" fill="#2b2b2b"/><path d="M1136.1000000000001 666.1 H1144.8000000000002 L1140.45 669.9 Z" fill="#2b2b2b"/><path d="M1133.9 670.1 H1139.1000000000001 L1140.45 670.9 L1141.8000000000002 670.1 H1147.0 V673.8 H1133.9 Z" fill="#2b2b2b"/><circle cx="1143.5" cy="672.3" r="0.55" fill="#fff"/><circle cx="1145.5" cy="672.3" r="0.55" fill="#fff"/></svg>
<svg style="position:absolute;left:1175px;top:660px;width:20px;height:16px;overflow:visible" viewBox="1175 660 20 16" fill="#2b2b2b"><path d="M1178.8 664.9 H1189.6 L1184.2 671 Z"/></svg>
<svg style="position:absolute;left:786px;top:721px;width:20px;height:20px;overflow:visible" viewBox="786 721 20 20" fill="#2b2b2b"><path d="M799.6 726.6 H791.5 Q790.6 726.6 790.6 727.5 V735.4 Q790.6 736.3 791.5 736.3 H799.5 Q800.4 736.3 800.4 735.4 V733.4" fill="none" stroke="#2b2b2b" stroke-width="1.2"/><path d="M796.4 733.1 L803.0 726.7" stroke="#2b2b2b" stroke-width="2.3"/><path d="M795.0 732.0 L797.6 734.4 L794.5 735.3 Z" fill="#2b2b2b"/></svg>
<svg style="position:absolute;left:1110px;top:703px;width:22px;height:22px;overflow:visible" viewBox="1110 703 22 22" fill="#2b2b2b"><path d="M1116.2 708 H1123.4 L1125.4 710 V714 H1116.2 Z" fill="#2b2b2b"/><path d="M1117.3 709.1 H1122.6000000000001 V710.9 H1124.3 V714 H1117.3 Z" fill="#fff"/><path d="M1115.0 713.3 H1126.7 Q1127.5 713.3 1127.5 714.1 V717.5 H1114.2 V714.1 Q1114.2 713.3 1115.0 713.3 Z" fill="#2b2b2b"/><path d="M1116.2 717 H1125.4 V719.6 H1116.2 Z" fill="#2b2b2b"/><rect x="1117.3" y="717.3" width="7" height="1.3" fill="#fff"/><circle cx="1126.2" cy="714.6" r="0.5" fill="#fff"/></svg>
<svg style="position:absolute;left:1085px;top:741px;width:22px;height:20px;overflow:visible" viewBox="1085 741 22 20" fill="#2b2b2b"><path d="M1089 745 H1103.4 V746.6 Q1103.4 747.6 1102.2 748.4 L1096.2 752.4 L1090.2 748.4 Q1089 747.6 1089 746.6 Z" fill="#2b2b2b"/><path d="M1089 749.3 L1096.2 753.7 L1103.4 749.3 V755.6 H1089 Z" fill="#2b2b2b"/></svg>
<svg style="position:absolute;left:1130px;top:739px;width:22px;height:20px;overflow:visible" viewBox="1130 739 22 20" fill="#2b2b2b"><rect x="1139.0" y="743" width="3" height="4.4" fill="#2b2b2b"/><path d="M1136.1000000000001 747.1 H1144.8000000000002 L1140.45 750.9 Z" fill="#2b2b2b"/><path d="M1133.9 751.1 H1139.1000000000001 L1140.45 751.9 L1141.8000000000002 751.1 H1147.0 V754.8 H1133.9 Z" fill="#2b2b2b"/><circle cx="1143.5" cy="753.3" r="0.55" fill="#fff"/><circle cx="1145.5" cy="753.3" r="0.55" fill="#fff"/></svg>
<svg style="position:absolute;left:1175px;top:741px;width:20px;height:16px;overflow:visible" viewBox="1175 741 20 16" fill="#2b2b2b"><path d="M1178.8 745.9 H1189.6 L1184.2 752 Z"/></svg>
<svg style="position:absolute;left:786px;top:802px;width:20px;height:20px;overflow:visible" viewBox="786 802 20 20" fill="#2b2b2b"><path d="M799.6 807.6 H791.5 Q790.6 807.6 790.6 808.5 V816.4 Q790.6 817.3 791.5 817.3 H799.5 Q800.4 817.3 800.4 816.4 V814.4" fill="none" stroke="#2b2b2b" stroke-width="1.2"/><path d="M796.4 814.1 L803.0 807.7" stroke="#2b2b2b" stroke-width="2.3"/><path d="M795.0 813.0 L797.6 815.4 L794.5 816.3 Z" fill="#2b2b2b"/></svg>
<svg style="position:absolute;left:1110px;top:784px;width:22px;height:22px;overflow:visible" viewBox="1110 784 22 22" fill="#2b2b2b"><path d="M1116.2 789 H1123.4 L1125.4 791 V795 H1116.2 Z" fill="#2b2b2b"/><path d="M1117.3 790.1 H1122.6000000000001 V791.9 H1124.3 V795 H1117.3 Z" fill="#fff"/><path d="M1115.0 794.3 H1126.7 Q1127.5 794.3 1127.5 795.1 V798.5 H1114.2 V795.1 Q1114.2 794.3 1115.0 794.3 Z" fill="#2b2b2b"/><path d="M1116.2 798 H1125.4 V800.6 H1116.2 Z" fill="#2b2b2b"/><rect x="1117.3" y="798.3" width="7" height="1.3" fill="#fff"/><circle cx="1126.2" cy="795.6" r="0.5" fill="#fff"/></svg>
<svg style="position:absolute;left:1085px;top:822px;width:22px;height:20px;overflow:visible" viewBox="1085 822 22 20" fill="#2b2b2b"><path d="M1089 826 H1103.4 V827.6 Q1103.4 828.6 1102.2 829.4 L1096.2 833.4 L1090.2 829.4 Q1089 828.6 1089 827.6 Z" fill="#2b2b2b"/><path d="M1089 830.3 L1096.2 834.7 L1103.4 830.3 V836.6 H1089 Z" fill="#2b2b2b"/></svg>
<svg style="position:absolute;left:1130px;top:820px;width:22px;height:20px;overflow:visible" viewBox="1130 820 22 20" fill="#2b2b2b"><rect x="1139.0" y="824" width="3" height="4.4" fill="#2b2b2b"/><path d="M1136.1000000000001 828.1 H1144.8000000000002 L1140.45 831.9 Z" fill="#2b2b2b"/><path d="M1133.9 832.1 H1139.1000000000001 L1140.45 832.9 L1141.8000000000002 832.1 H1147.0 V835.8 H1133.9 Z" fill="#2b2b2b"/><circle cx="1143.5" cy="834.3" r="0.55" fill="#fff"/><circle cx="1145.5" cy="834.3" r="0.55" fill="#fff"/></svg>
<svg style="position:absolute;left:1175px;top:822px;width:20px;height:16px;overflow:visible" viewBox="1175 822 20 16" fill="#2b2b2b"><path d="M1178.8 826.9 H1189.6 L1184.2 833 Z"/></svg>
<div class="b" style="left:1170px;top:750px;width:90px;height:35px;background:#00b88b;border-radius:5px;"></div>
<div class="t" style="top:762.06px;font-size:16px;color:#fff;font-weight:bold;left:915px;width:600px;text-align:center;">Help ?</div>
</body></html>
